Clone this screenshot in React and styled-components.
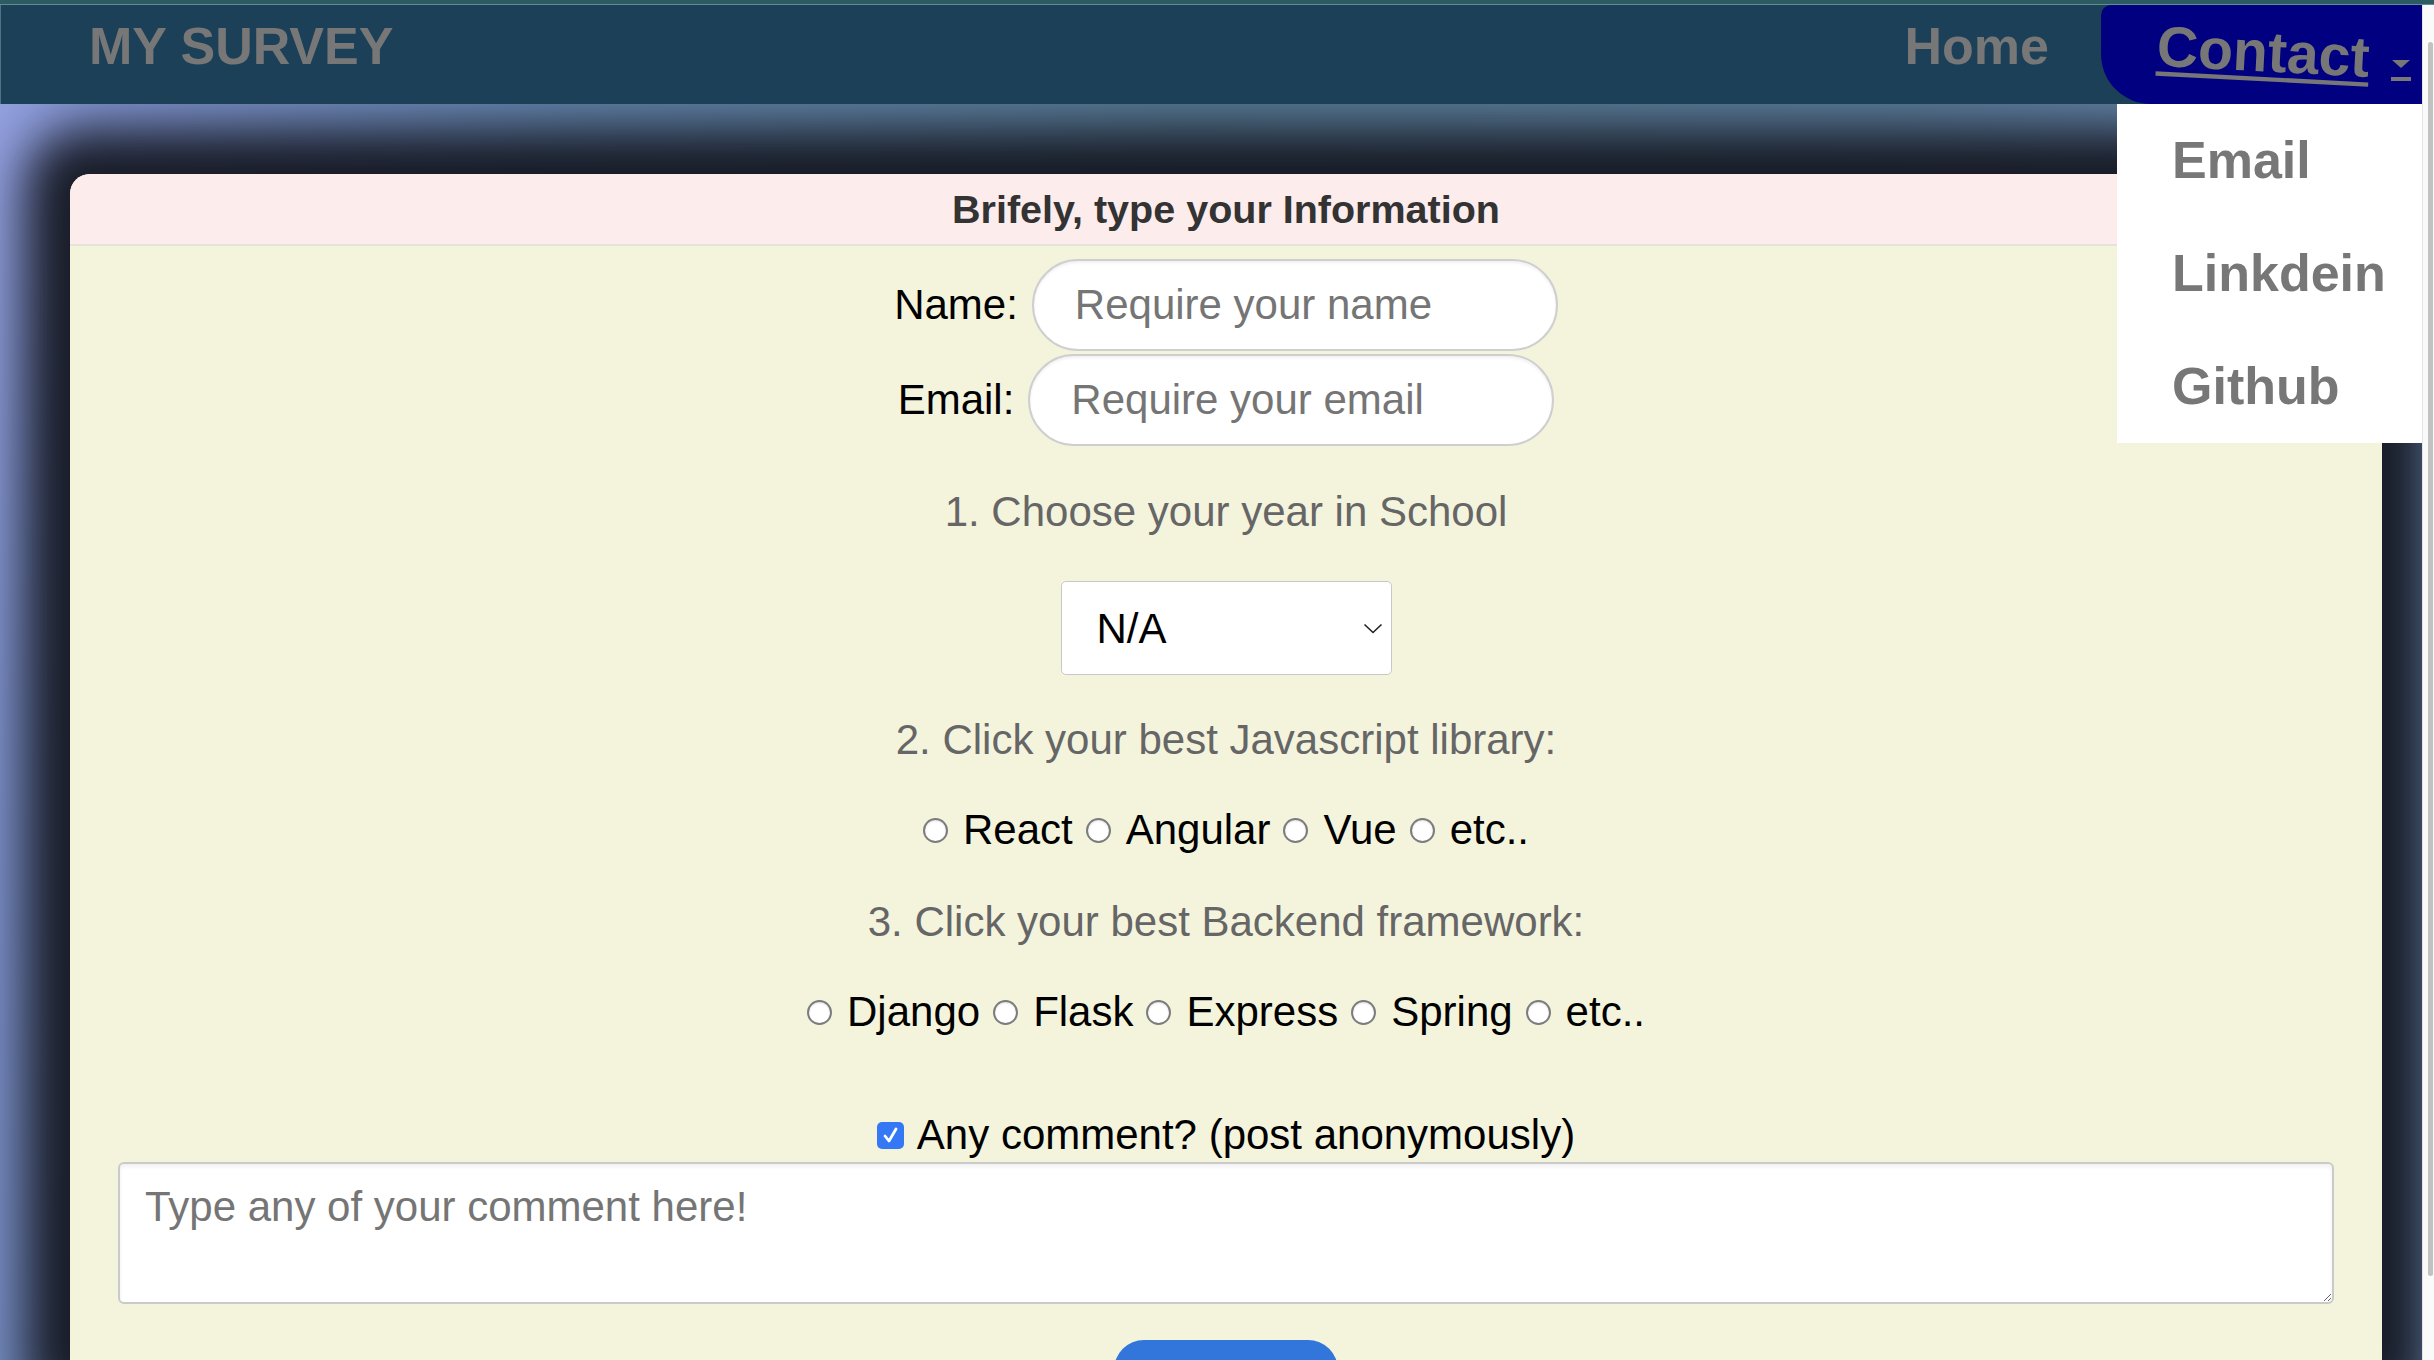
import React from "react";
import styled, { createGlobalStyle } from "styled-components";

const Global = createGlobalStyle`
  html, body { margin: 0; padding: 0; height: 100%; overflow: hidden; }
  body { font-family: "Liberation Sans", Arial, Helvetica, sans-serif; background: #fff; }
  #root { height: 100%; }
  *, *::before, *::after { box-sizing: border-box; }
`;

const Page = styled.div`
  display: flex;
  flex-direction: column;
  width: 100%;
  height: 100vh;
`;

const TopStrip = styled.div`
  flex: none;
  height: 5px;
  background: #2c5c62;
  border-bottom: 1px solid #5f8e92;
`;

const Viewport = styled.div`
  flex: 1;
  display: flex;
  min-height: 0;
`;

const Main = styled.div`
  flex: 1;
  min-width: 0;
  display: flex;
  flex-direction: column;
  overflow: hidden;
  background: linear-gradient(100deg, #96a2e2 0%, #8094d0 5%, #6384ac 22%, #587b96 45%, #5c7d9c 72%, #6a87b2 90%, #6a87b2 100%);
`;

const ScrollTrack = styled.div`
  flex: none;
  width: 12px;
  background: #fafafa;
  border-left: 1px solid #e4e4e4;
  padding: 37px 1px 0 5px;
`;

const ScrollThumb = styled.div`
  height: 1234px;
  background: #c2c2c2;
  border-radius: 4px;
`;

const Nav = styled.nav`
  flex: none;
  position: relative;
  z-index: 5;
  display: flex;
  justify-content: space-between;
  height: 99px;
  background: #1b4058;
  border-left: 1px solid #4b7484;
`;

const Brand = styled.a`
  padding: 11px 0 0 88px;
  font-size: 52px;
  line-height: 60px;
  font-weight: bold;
  color: #777;
  text-decoration: none;
`;

const NavList = styled.ul`
  display: flex;
  margin: 0;
  padding: 0;
  list-style: none;
`;

const NavItem = styled.li`
  display: flex;
  align-items: flex-start;
  padding-top: 11px;
  margin-right: 52px;
`;

const NavLink = styled.a`
  font-size: 52px;
  line-height: 60px;
  font-weight: bold;
  color: #777;
  text-decoration: none;
`;

const ContactTab = styled.li`
  position: relative;
  display: flex;
  align-items: flex-start;
  width: 321px;
  padding: 11px 0 0 56px;
  background: #000080;
  border-radius: 10px 0 0 50px;
`;

const ContactLink = styled.a`
  display: inline-block;
  font-size: 52px;
  line-height: 60px;
  font-weight: bold;
  color: #777;
  text-decoration: underline;
  text-decoration-thickness: 4px;
  text-underline-offset: 5px;
  transform: rotate(3deg) scale(1.1);
  transform-origin: left center;
`;

const Caret = styled.span`
  display: flex;
  flex-direction: column;
  align-items: center;
  gap: 9px;
  margin: 44px 0 0 40px;
`;

const CaretTriangle = styled.span`
  width: 0;
  height: 0;
  border-top: 8px solid #777;
  border-left: 9px solid transparent;
  border-right: 9px solid transparent;
`;

const CaretBar = styled.span`
  width: 20px;
  height: 4px;
  background: #777;
`;

const Dropdown = styled.ul`
  position: absolute;
  top: 100%;
  right: 0;
  width: 305px;
  margin: 0;
  padding: 0;
  list-style: none;
  background: #fff;
`;

const DropItem = styled.li`
  padding: 26px 0 27px 55px;
`;

const DropLink = styled.a`
  display: block;
  font-size: 52px;
  line-height: 60px;
  font-weight: bold;
  color: #777;
  text-decoration: none;
`;

const Card = styled.section`
  margin: 70px 40px 0 70px;
  border-radius: 20px 20px 0 0;
  background: #f4f4dd;
  box-shadow: 0 0 50px 45px rgba(21, 24, 33, 0.97);
  overflow: hidden;
`;

const CardHeader = styled.header`
  display: flex;
  align-items: center;
  justify-content: center;
  height: 72px;
  background: #fcecec;
  border-bottom: 2px solid #e4e4dc;
`;

const CardTitle = styled.h2`
  margin: 0;
  font-size: 39.5px;
  font-weight: bold;
  color: #333;
`;

const Form = styled.form`
  display: flex;
  flex-direction: column;
  align-items: center;
  padding: 13px 48px 0;
`;

const FieldRow = styled.div`
  display: flex;
  align-items: baseline;
  justify-content: center;
  gap: 14px;
  margin-top: ${(p) => (p.$first ? "0" : "3px")};
`;

const FieldLabel = styled.label`
  font-size: 42px;
  color: #000;
`;

const TextInput = styled.input`
  width: 526px;
  height: 92px;
  padding: 0 41px;
  border: 2px solid #cfcfcf;
  border-radius: 46px;
  background: #fff;
  box-shadow: inset 0 2px 3px rgba(0, 0, 0, 0.06);
  font-family: inherit;
  font-size: 42px;
  color: #000;
  outline: none;
  &::placeholder { color: #757575; }
`;

const Question = styled.p`
  margin: ${(p) => p.$mt}px 0 0;
  font-size: 42px;
  line-height: 48px;
  color: #666;
  text-align: center;
`;

const SelectWrap = styled.div`
  position: relative;
  margin-top: 45px;
`;

const Select = styled.select`
  display: block;
  width: 331px;
  height: 94px;
  padding: 0 0 0 35px;
  border: 1.5px solid #c8c8c8;
  border-radius: 5px;
  background: #fff;
  font-family: inherit;
  font-size: 42px;
  color: #000;
  appearance: none;
  outline: none;
`;

const Chevron = styled.svg`
  position: absolute;
  right: 9px;
  top: 42px;
  pointer-events: none;
`;

const OptionRow = styled.div`
  display: flex;
  justify-content: center;
  gap: 13px;
  margin-top: ${(p) => p.$mt}px;
`;

const OptionLabel = styled.label`
  display: flex;
  align-items: center;
  gap: 15px;
  font-size: 42px;
  line-height: 48px;
  color: #000;
`;

const Radio = styled.input`
  appearance: none;
  margin: 0;
  width: 25px;
  height: 25px;
  border: 2px solid #7c7c7c;
  border-radius: 50%;
  background: #fff;
  box-shadow: inset 0 1px 2px rgba(0, 0, 0, 0.12);
`;

const CheckRow = styled.label`
  display: flex;
  align-items: center;
  gap: 13px;
  margin-top: 75px;
  font-size: 42px;
  line-height: 48px;
  color: #000;
`;

const CheckBoxWrap = styled.span`
  position: relative;
  display: inline-flex;
  width: 27px;
  height: 27px;
`;

const CheckBox = styled.input`
  appearance: none;
  margin: 0;
  width: 27px;
  height: 27px;
  border-radius: 5px;
  background: #3478f6;
`;

const CheckMark = styled.svg`
  position: absolute;
  left: 0;
  top: 0;
  pointer-events: none;
`;

const CommentArea = styled.textarea`
  display: block;
  width: 100%;
  height: 142px;
  margin-top: 3px;
  padding: 19px 25px;
  border: 2px solid #cacaca;
  border-radius: 6px;
  background: #fff;
  box-shadow: inset 0 3px 4px rgba(0, 0, 0, 0.06);
  font-family: inherit;
  font-size: 42px;
  color: #000;
  resize: both;
  outline: none;
  &::placeholder { color: #757575; }
`;

const SubmitButton = styled.button`
  flex: none;
  width: 224px;
  height: 90px;
  margin-top: 36px;
  border: none;
  border-radius: 30px;
  background: #3276dc;
  color: #fff;
  font-family: inherit;
  font-size: 42px;
`;

const libraries = ["React", "Angular", "Vue", "etc.."];
const backends = ["Django", "Flask", "Express", "Spring", "etc.."];

export default function App() {
  return (
    <>
      <Global />
      <Page>
        <TopStrip />
        <Viewport>
          <Main>
            <Nav>
              <Brand href="#">MY SURVEY</Brand>
              <NavList>
                <NavItem>
                  <NavLink href="#">Home</NavLink>
                </NavItem>
                <ContactTab>
                  <ContactLink href="#">Contact</ContactLink>
                  <Caret>
                    <CaretTriangle />
                    <CaretBar />
                  </Caret>
                  <Dropdown>
                    <DropItem><DropLink href="#">Email</DropLink></DropItem>
                    <DropItem><DropLink href="#">Linkdein</DropLink></DropItem>
                    <DropItem><DropLink href="#">Github</DropLink></DropItem>
                  </Dropdown>
                </ContactTab>
              </NavList>
            </Nav>
            <Card>
              <CardHeader>
                <CardTitle>Brifely, type your Information</CardTitle>
              </CardHeader>
              <Form onSubmit={(e) => e.preventDefault()}>
                <FieldRow $first>
                  <FieldLabel htmlFor="name">Name:</FieldLabel>
                  <TextInput id="name" type="text" placeholder="Require your name" />
                </FieldRow>
                <FieldRow>
                  <FieldLabel htmlFor="email">Email:</FieldLabel>
                  <TextInput id="email" type="email" placeholder="Require your email" />
                </FieldRow>
                <Question $mt={42}>1. Choose your year in School</Question>
                <SelectWrap>
                  <Select defaultValue="na">
                    <option value="na">N/A</option>
                    <option value="1">Freshman</option>
                    <option value="2">Sophomore</option>
                    <option value="3">Junior</option>
                    <option value="4">Senior</option>
                  </Select>
                  <Chevron width="20" height="11" viewBox="0 0 20 11">
                    <path d="M1.5 1.5 L10 9.5 L18.5 1.5" fill="none" stroke="#222" strokeWidth="1.6" />
                  </Chevron>
                </SelectWrap>
                <Question $mt={41}>2. Click your best Javascript library:</Question>
                <OptionRow $mt={42}>
                  {libraries.map((lib) => (
                    <OptionLabel key={lib}>
                      <Radio type="radio" name="library" value={lib} />
                      {lib}
                    </OptionLabel>
                  ))}
                </OptionRow>
                <Question $mt={44}>3. Click your best Backend framework:</Question>
                <OptionRow $mt={42}>
                  {backends.map((b) => (
                    <OptionLabel key={b}>
                      <Radio type="radio" name="backend" value={b} />
                      {b}
                    </OptionLabel>
                  ))}
                </OptionRow>
                <CheckRow>
                  <CheckBoxWrap>
                    <CheckBox type="checkbox" defaultChecked />
                    <CheckMark width="27" height="27" viewBox="0 0 27 27">
                      <path d="M8 14 L12 19 L19 7" fill="none" stroke="#fff" strokeWidth="2.8" strokeLinecap="round" strokeLinejoin="round" />
                    </CheckMark>
                  </CheckBoxWrap>
                  Any comment? (post anonymously)
                </CheckRow>
                <CommentArea placeholder="Type any of your comment here!" />
                <SubmitButton type="submit" aria-label="Submit" />
              </Form>
            </Card>
          </Main>
          <ScrollTrack>
            <ScrollThumb />
          </ScrollTrack>
        </Viewport>
      </Page>
    </>
  );
}
